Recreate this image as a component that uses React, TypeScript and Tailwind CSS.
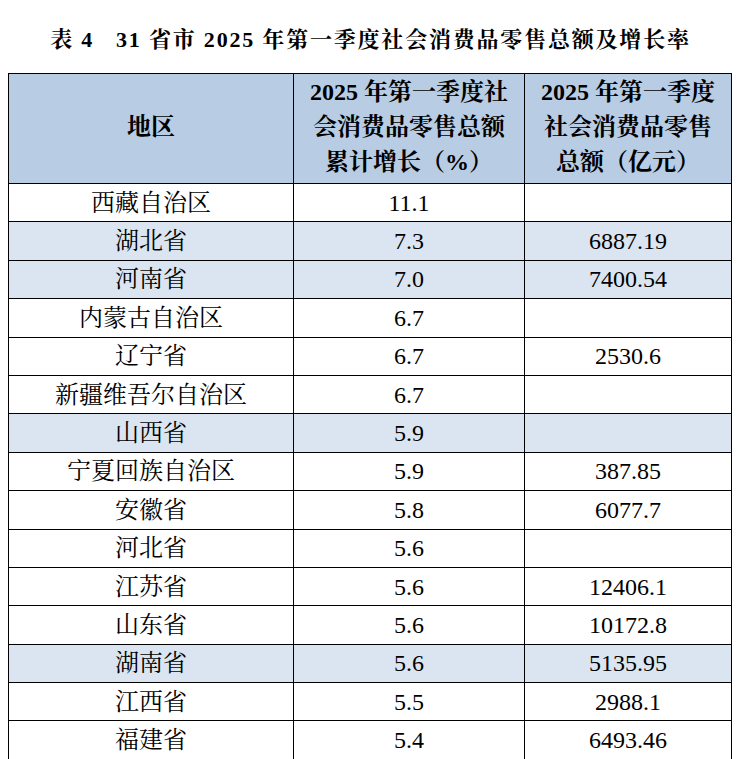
const rows: { name: string; growth: string; total: string; shaded?: boolean }[] = [
  { name: "西藏自治区", growth: "11.1", total: "" },
  { name: "湖北省", growth: "7.3", total: "6887.19", shaded: true },
  { name: "河南省", growth: "7.0", total: "7400.54", shaded: true },
  { name: "内蒙古自治区", growth: "6.7", total: "" },
  { name: "辽宁省", growth: "6.7", total: "2530.6" },
  { name: "新疆维吾尔自治区", growth: "6.7", total: "" },
  { name: "山西省", growth: "5.9", total: "", shaded: true },
  { name: "宁夏回族自治区", growth: "5.9", total: "387.85" },
  { name: "安徽省", growth: "5.8", total: "6077.7" },
  { name: "河北省", growth: "5.6", total: "" },
  { name: "江苏省", growth: "5.6", total: "12406.1" },
  { name: "山东省", growth: "5.6", total: "10172.8" },
  { name: "湖南省", growth: "5.6", total: "5135.95", shaded: true },
  { name: "江西省", growth: "5.5", total: "2988.1" },
  { name: "福建省", growth: "5.4", total: "6493.46" },
];

const font = "font-['Liberation_Serif','Noto_Serif_CJK_SC','Noto_Sans_CJK_SC',serif]";

export default function App() {
  return (
    <div className={`min-h-screen w-[741px] bg-white text-black ${font}`}>
      <h1 className="pt-[24px] text-center text-[22px] font-bold leading-[32px] tracking-[1.8px]">
        表 4{"\u00a0\u00a0\u00a0"}31 省市 2025 年第一季度社会消费品零售总额及增长率
      </h1>

      <table className="ml-[8px] mt-[17px] w-[723px] table-fixed border-collapse text-center">
        <colgroup>
          <col className="w-[285px]" />
          <col className="w-[231px]" />
          <col className="w-[207px]" />
        </colgroup>
        <thead>
          <tr className="h-[110px] bg-[#b8cce4] text-[24px] font-bold leading-[35px]">
            <th className="border border-black pb-[2px]">地区</th>
            <th className="border border-black pb-[2px]">
              2025 年第一季度社
              <br />
              会消费品零售总额
              <br />
              累计增长（%）
            </th>
            <th className="border border-black pb-[2px]">
              2025 年第一季度
              <br />
              社会消费品零售
              <br />
              总额（亿元）
            </th>
          </tr>
        </thead>
        <tbody className="text-[24px] leading-[30px]">
          {rows.map((r) => (
            <tr key={r.name} className={`h-[38.4px] ${r.shaded ? "bg-[#dbe5f1]" : "bg-white"}`}>
              <td className="border border-black p-0">{r.name}</td>
              <td className="border border-black p-0">{r.growth}</td>
              <td className="border border-black p-0">{r.total}</td>
            </tr>
          ))}
        </tbody>
      </table>
    </div>
  );
}
